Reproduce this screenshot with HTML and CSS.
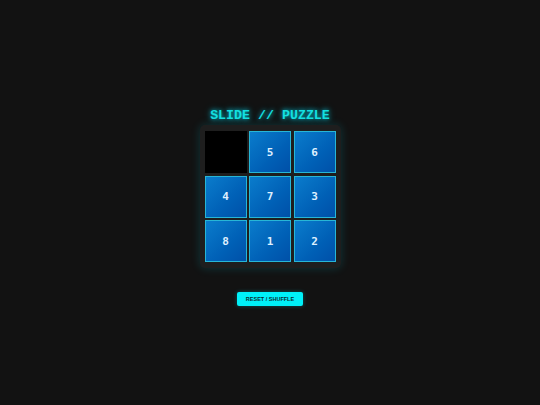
FILE: index.html
```html
<!DOCTYPE html>
<html>
<head>
<meta charset="utf-8">
<link rel="stylesheet" href="styles.css">
</head>
<body>
<div class="app">
  <h1 class="title">SLIDE // PUZZLE</h1>
  <div class="board">
    <div class="tile empty"></div>
    <div class="tile">5</div>
    <div class="tile">6</div>
    <div class="tile">4</div>
    <div class="tile">7</div>
    <div class="tile">3</div>
    <div class="tile">8</div>
    <div class="tile">1</div>
    <div class="tile">2</div>
  </div>
  <button class="reset">RESET / SHUFFLE</button>
</div>
</body>
</html>
```
FILE: styles.css
```css
html, body {
  margin: 0;
  padding: 0;
  background: #121212;
  width: 540px;
  height: 405px;
  overflow: hidden;
}
.app {
  display: flex;
  flex-direction: column;
  align-items: center;
  padding-top: 108px;
}
.title {
  margin: 0;
  font-family: "Liberation Mono", "DejaVu Sans Mono", monospace;
  font-weight: bold;
  font-size: 13.3px;
  line-height: 15px;
  color: #14e0e0;
  text-shadow: 0 0 4px rgba(0, 230, 255, 0.8), 0 0 8px rgba(0, 230, 255, 0.4);
}
.board {
  margin-top: 2px;
  display: grid;
  grid-template-columns: repeat(3, 42px);
  grid-template-rows: repeat(3, 42px);
  gap: 2.5px;
  padding: 6px 5px;
  background: #1e1e1e;
  border-radius: 5px;
  box-shadow: 0 0 10px rgba(0, 200, 220, 0.2);
}
.tile {
  box-sizing: border-box;
  border: 1px solid #27b6d6;
  background: linear-gradient(135deg, #0a7ccc 0%, #0060b6 60%, #0050a8 100%);
  display: flex;
  align-items: center;
  justify-content: center;
  font-family: "DejaVu Sans Mono", "Liberation Mono", monospace;
  font-weight: bold;
  font-size: 11px;
  color: #dff0ff;
}
.tile.empty {
  background: #000;
  border: none;
}
.reset {
  margin-top: 24px;
  width: 66px;
  height: 14px;
  padding: 0;
  border: none;
  border-radius: 2px;
  background: #00f0f8;
  color: #0b2b30;
  font-family: "Liberation Sans", Arial, sans-serif;
  font-weight: bold;
  font-size: 5.5px;
  line-height: 14px;
  box-shadow: 0 0 4px rgba(0, 240, 255, 0.3);
}
```
